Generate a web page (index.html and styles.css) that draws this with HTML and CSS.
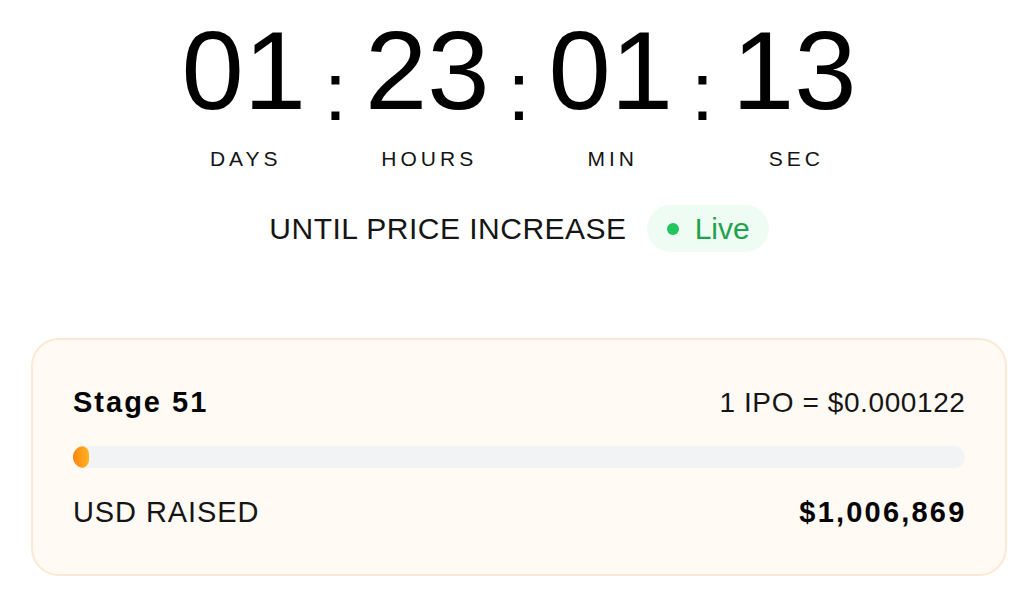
FILE: index.html
```html
<!DOCTYPE html>
<html lang="en">
<head>
<meta charset="utf-8">
<title>Presale countdown</title>
<link rel="stylesheet" href="styles.css">
</head>
<body>
<main class="wrap">
  <section class="countdown">
    <div class="unit">
      <div class="num">01</div>
      <div class="label">DAYS</div>
    </div>
    <div class="colon">:</div>
    <div class="unit">
      <div class="num">23</div>
      <div class="label">HOURS</div>
    </div>
    <div class="colon">:</div>
    <div class="unit">
      <div class="num">01</div>
      <div class="label">MIN</div>
    </div>
    <div class="colon">:</div>
    <div class="unit">
      <div class="num">13</div>
      <div class="label">SEC</div>
    </div>
  </section>

  <div class="until">
    <span class="until-text">UNTIL PRICE INCREASE</span>
    <span class="live"><span class="live-dot"></span><span class="live-text">Live</span></span>
  </div>

  <section class="card">
    <div class="row">
      <span class="stage">Stage 51</span>
      <span class="price">1 IPO = $0.000122</span>
    </div>
    <div class="track"><div class="fill" style="width:16px"></div></div>
    <div class="row">
      <span class="usd">USD RAISED</span>
      <span class="raised">$1,006,869</span>
    </div>
  </section>
</main>
</body>
</html>
```

FILE: styles.css
```css
* { box-sizing: border-box; }

html, body {
  margin: 0;
  padding: 0;
  background: #ffffff;
}

body {
  font-family: "Liberation Sans", Arial, sans-serif;
  color: #111111;
}

.wrap {
  width: 976px;
  margin-left: 31px;
  padding-top: 15px;
}

.countdown {
  display: flex;
  justify-content: center;
  align-items: flex-start;
}

.unit {
  width: 160px;
  display: flex;
  flex-direction: column;
  align-items: center;
}

.num {
  font-size: 112px;
  line-height: 112px;
  color: #000000;
}

.label {
  margin-top: 19px;
  font-size: 21px;
  line-height: 25px;
  letter-spacing: 4px;
  padding-left: 4px;
  color: #141414;
}

.colon {
  width: 23.5px;
  text-align: center;
  font-size: 84px;
  line-height: 84px;
  margin-top: 34px;
  color: #000000;
}

.until {
  margin-top: 34px;
  display: flex;
  justify-content: center;
  align-items: center;
  gap: 20px;
}

.until-text {
  font-size: 30px;
  line-height: 36px;
  letter-spacing: 0.5px;
  color: #151515;
}

.live {
  height: 47px;
  display: inline-flex;
  align-items: center;
  gap: 16px;
  padding: 0 19px 0 20px;
  border-radius: 999px;
  background: #effcf3;
}

.live-dot {
  width: 12px;
  height: 12px;
  border-radius: 50%;
  background: #22c55e;
}

.live-text {
  font-size: 30px;
  line-height: 36px;
  color: #1ea34c;
}

.card {
  margin-top: 86px;
  border: 2px solid #fde9d3;
  border-radius: 28px;
  background: #fffaf4;
  padding: 45px 40px 44px 40px;
}

.row {
  display: flex;
  justify-content: space-between;
  align-items: baseline;
}

.stage {
  font-size: 29px;
  line-height: 35px;
  font-weight: 700;
  letter-spacing: 2px;
  color: #050505;
}

.price {
  font-size: 28px;
  line-height: 35px;
  letter-spacing: 0.6px;
  margin-right: -0.5px;
  color: #151515;
}

.track {
  margin-top: 26px;
  margin-bottom: 27px;
  height: 22px;
  border-radius: 11px;
  background: #f2f3f5;
  overflow: hidden;
}

.fill {
  height: 100%;
  border-radius: 999px;
  background: linear-gradient(to right, #ff8410, #ffb320);
}

.usd {
  font-size: 29px;
  line-height: 35px;
  letter-spacing: 0.9px;
  color: #151515;
}

.raised {
  font-size: 29px;
  line-height: 35px;
  font-weight: 700;
  letter-spacing: 2.2px;
  margin-right: -1.5px;
  color: #050505;
}
```
